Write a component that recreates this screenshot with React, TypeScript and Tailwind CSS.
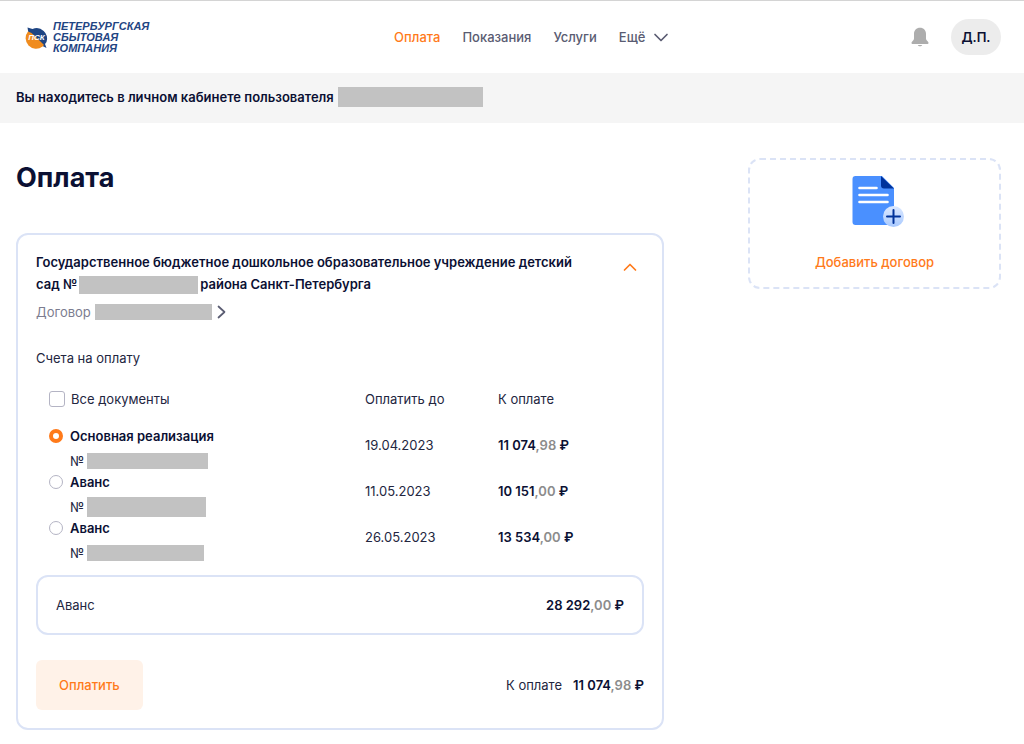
import { useState } from "react"

type Invoice = {
  id: string
  title: string
  due: string
  rub: string
  kop: string
  maskClass: string
}

const NAV_ITEMS: { label: string; href: string; active?: boolean }[] = [
  { label: "Оплата", href: "#payment", active: true },
  { label: "Показания", href: "#readings" },
  { label: "Услуги", href: "#services" },
]

const INVOICES: Invoice[] = [
  {
    id: "main",
    title: "Основная реализация",
    due: "19.04.2023",
    rub: "11 074",
    kop: "98",
    maskClass: "h-4 w-[121px]",
  },
  {
    id: "advance-1",
    title: "Аванс",
    due: "11.05.2023",
    rub: "10 151",
    kop: "00",
    maskClass: "h-5 w-[119px]",
  },
  {
    id: "advance-2",
    title: "Аванс",
    due: "26.05.2023",
    rub: "13 534",
    kop: "00",
    maskClass: "h-4 w-[117px]",
  },
]

// Grey block over personal data
const Mask = ({ className }: { className: string }) => (
  <span aria-hidden="true" className={`inline-block shrink-0 bg-[#c2c2c2] ${className}`} />
)

const Amount = ({ rub, kop }: { rub: string; kop: string }) => (
  <span className="whitespace-nowrap font-semibold text-[#0b1033]">
    {rub}
    <span className="text-[#8c8c8c]">,{kop}</span> ₽
  </span>
)

const Logo = () => (
  <a href="#home" className="flex items-center gap-1 text-[#1f4583]">
    <svg className="h-6 w-6" viewBox="0 0 24 24">
      <path d="M2.500 2.500L7.500 4A10.500 10.500 0 0 1 21.500 17l-1.500 2 1.500 4-5-2.500L3.500 8.500z" fill="#1f4583" />
      <path d="M3 6.500A10.500 10.500 0 0 0 17.500 21.500L19 20 15.500 16.500 6.500 8z" fill="#f08c1e" />
      <text
        x="11.5"
        y="15"
        textAnchor="middle"
        fontFamily="Liberation Sans, sans-serif"
        fontSize="8"
        fontWeight="700"
        fontStyle="italic"
        fill="#fff"
      >
        ПСК
      </text>
    </svg>
    <span className="flex flex-col pt-px font-['Liberation_Sans',sans-serif] text-[11px] font-bold italic leading-[11px]">
      <span>ПЕТЕРБУРГСКАЯ</span>
      <span>СБЫТОВАЯ</span>
      <span>КОМПАНИЯ</span>
    </span>
  </a>
)

const Chevron = ({ className, d }: { className: string; d: string }) => (
  <svg
    className={className}
    viewBox="0 0 16 16"
    fill="none"
    stroke="currentColor"
    strokeWidth="1.7"
    strokeLinecap="round"
    strokeLinejoin="round"
  >
    <path d={d} />
  </svg>
)

const Bell = () => (
  <svg className="h-5 w-5" viewBox="0 0 20 20" fill="#adadad">
    <path d="M10 .8c-3.700 0-6 2.700-6 6v4.500c0 1.200-.4 1.800-1.300 2.700-.8.800-1.200 1.200-1.200 1.900 0 .7.500 1.100 1.300 1.100h14.400c.8 0 1.300-.4 1.300-1.100 0-.7-.4-1.100-1.200-1.900-.9-.9-1.300-1.500-1.300-2.700V6.800c0-3.300-2.300-6-6-6z" />
    <path d="M7.800 18h4.400c-.3.900-1.100 1.300-2.200 1.300s-1.900-.4-2.200-1.300z" />
  </svg>
)

const AddDocument = () => (
  <svg className="h-[54px] w-[60px]" viewBox="-6 0 60 54">
    <defs>
      <linearGradient id="plusFill" x1="0" y1="0" x2="0" y2="1">
        <stop offset="0" stopColor="#dbe8ff" />
        <stop offset="1" stopColor="#a9caff" />
      </linearGradient>
    </defs>
    <path d="M4.500 2H31l12 12v37H4.500a3 3 0 0 1-3-3V5a3 3 0 0 1 3-3z" fill="#4a90ff" />
    <path d="M30 2l13 12.500H33a3 3 0 0 1-3-3z" fill="#00329b" />
    <path
      d="M8.500 14h17M8.500 21h28M8.500 28h28"
      stroke="#fff"
      strokeWidth="2.600"
      strokeLinecap="round"
    />
    <circle cx="42.500" cy="42.500" r="10.500" fill="url(#plusFill)" />
    <path d="M42.500 36v13M36 42.500h13" stroke="#00329b" strokeWidth="2" strokeLinecap="round" />
  </svg>
)

const Header = () => (
  <header className="flex h-[73px] items-center justify-between border-t border-[#d4d4d4] pb-px pl-[25px] pr-[23px]">
    <Logo />
    <nav className="flex items-center gap-[22px] pl-1 font-medium text-[#5a5c72]">
      {NAV_ITEMS.map((item) => (
        <a key={item.label} href={item.href} className={item.active ? "text-[#ff7a1a]" : ""}>
          {item.label}
        </a>
      ))}
      <button type="button" className="flex items-center gap-2">
        Ещё
        <Chevron className="h-4 w-4" d="M2 5.500l6 6 6-6" />
      </button>
    </nav>
    <div className="flex items-center gap-[21px]">
      <button type="button" aria-label="Уведомления">
        <Bell />
      </button>
      <button
        type="button"
        className="h-9 w-[50px] rounded-full bg-[#ececec] font-semibold text-[#0b1033]"
      >
        Д.П.
      </button>
    </div>
  </header>
)

const InvoiceTable = () => {
  const [selected, setSelected] = useState("main")
  const [all, setAll] = useState(false)

  return (
    <table className="mt-[21px] w-full table-fixed text-left">
      <thead>
        <tr className="h-[37px] align-top">
          <th className="w-[329px] pl-[13px] font-normal">
            <label className="flex items-center gap-1.5">
              <input
                type="checkbox"
                checked={all}
                onChange={(e) => setAll(e.target.checked)}
                className="h-4 w-4 appearance-none rounded-[3px] border border-[#b4b4c4] checked:bg-[#ff7a1a]"
              />
              Все документы
            </label>
          </th>
          <th className="w-[133px] font-normal">Оплатить до</th>
          <th className="font-normal">К оплате</th>
        </tr>
      </thead>
      <tbody>
        {INVOICES.map((inv) => (
          <tr key={inv.id} className="h-[46px] align-top">
            <td className="pl-[13px]">
              <label className="flex items-center gap-[7px] font-semibold text-[#0b1033]">
                <input
                  type="radio"
                  name="invoice"
                  checked={selected === inv.id}
                  onChange={() => setSelected(inv.id)}
                  className="h-3.5 w-3.5 appearance-none rounded-full border border-[#b4b4c4] checked:border-4 checked:border-[#ff7a1a]"
                />
                {inv.title}
              </label>
              <div className="flex h-[25px] items-center gap-[3px] pl-[21px] pt-[5px]">
                №
                <Mask className={inv.maskClass} />
              </div>
            </td>
            <td className="pt-[9px]">{inv.due}</td>
            <td className="pt-[9px]">
              <Amount rub={inv.rub} kop={inv.kop} />
            </td>
          </tr>
        ))}
      </tbody>
    </table>
  )
}

const ContractCard = () => (
  <section className="rounded-xl border-2 border-[#dbe3f6] px-[18px] pb-[18px] pt-4">
    <div className="flex items-start justify-between">
      <h2 className="max-w-[556px] font-semibold leading-[22px] text-[#0b1033]">
        Государственное бюджетное дошкольное образовательное учреждение детский сад №
        <Mask className="mx-0.5 h-[18px] w-[119px] align-middle" />
        района Санкт-Петербурга
      </h2>
      <button type="button" aria-label="Свернуть" className="mr-1.5 mt-2 text-[#ff7a1a]">
        <Chevron className="h-4 w-4" d="M2.500 11l5.500-5.500 5.500 5.500" />
      </button>
    </div>
    <a href="#contract" className="mt-[7px] flex items-center gap-1 text-[#7c7d90]">
      Договор
      <Mask className="h-4 w-[117px]" />
      <Chevron className="h-4 w-4 text-[#5a5c72]" d="M2.500 2.500l6 5.500-6 5.500" />
    </a>
    <h3 className="mt-[26px]">Счета на оплату</h3>
    <InvoiceTable />
    <div className="mt-[11px] flex h-[60px] items-center justify-between rounded-xl border-2 border-[#dbe3f6] px-[18px]">
      <span>Аванс</span>
      <Amount rub="28 292" kop="00" />
    </div>
    <div className="mt-[25px] flex items-center justify-between">
      <button
        type="button"
        className="h-[50px] rounded-md bg-[#fff2e8] px-[23px] font-medium text-[#ff7a1a]"
      >
        Оплатить
      </button>
      <p className="flex gap-[11px]">
        К оплате
        <Amount rub="11 074" kop="98" />
      </p>
    </div>
  </section>
)

const App = () => (
  <div className="min-h-screen bg-white font-[Inter,sans-serif] text-[13px] leading-5 text-[#23263f]">
    <Header />
    <div className="flex h-[50px] items-center gap-1 bg-[#f5f5f5] px-4 pb-0.5 font-semibold text-[#0b1033]">
      Вы находитесь в личном кабинете пользователя
      <Mask className="h-5 w-[145px]" />
    </div>
    <div className="flex items-start gap-[84px] pb-4 pl-4 pr-[23px] pt-[35px]">
      <main className="min-w-0 flex-1">
        <h1 className="mb-[35px] text-[27px] font-bold leading-10 text-[#0b1033]">Оплата</h1>
        <ContractCard />
      </main>
      <aside className="w-[253px] shrink-0">
        <a
          href="#add"
          className="flex h-[131px] flex-col items-center rounded-xl border-2 border-dashed border-[#dbe3f6] pt-[14px] font-medium text-[#ff7a1a]"
        >
          <AddDocument />
          <span className="mt-6">Добавить договор</span>
        </a>
      </aside>
    </div>
  </div>
)

export default App
